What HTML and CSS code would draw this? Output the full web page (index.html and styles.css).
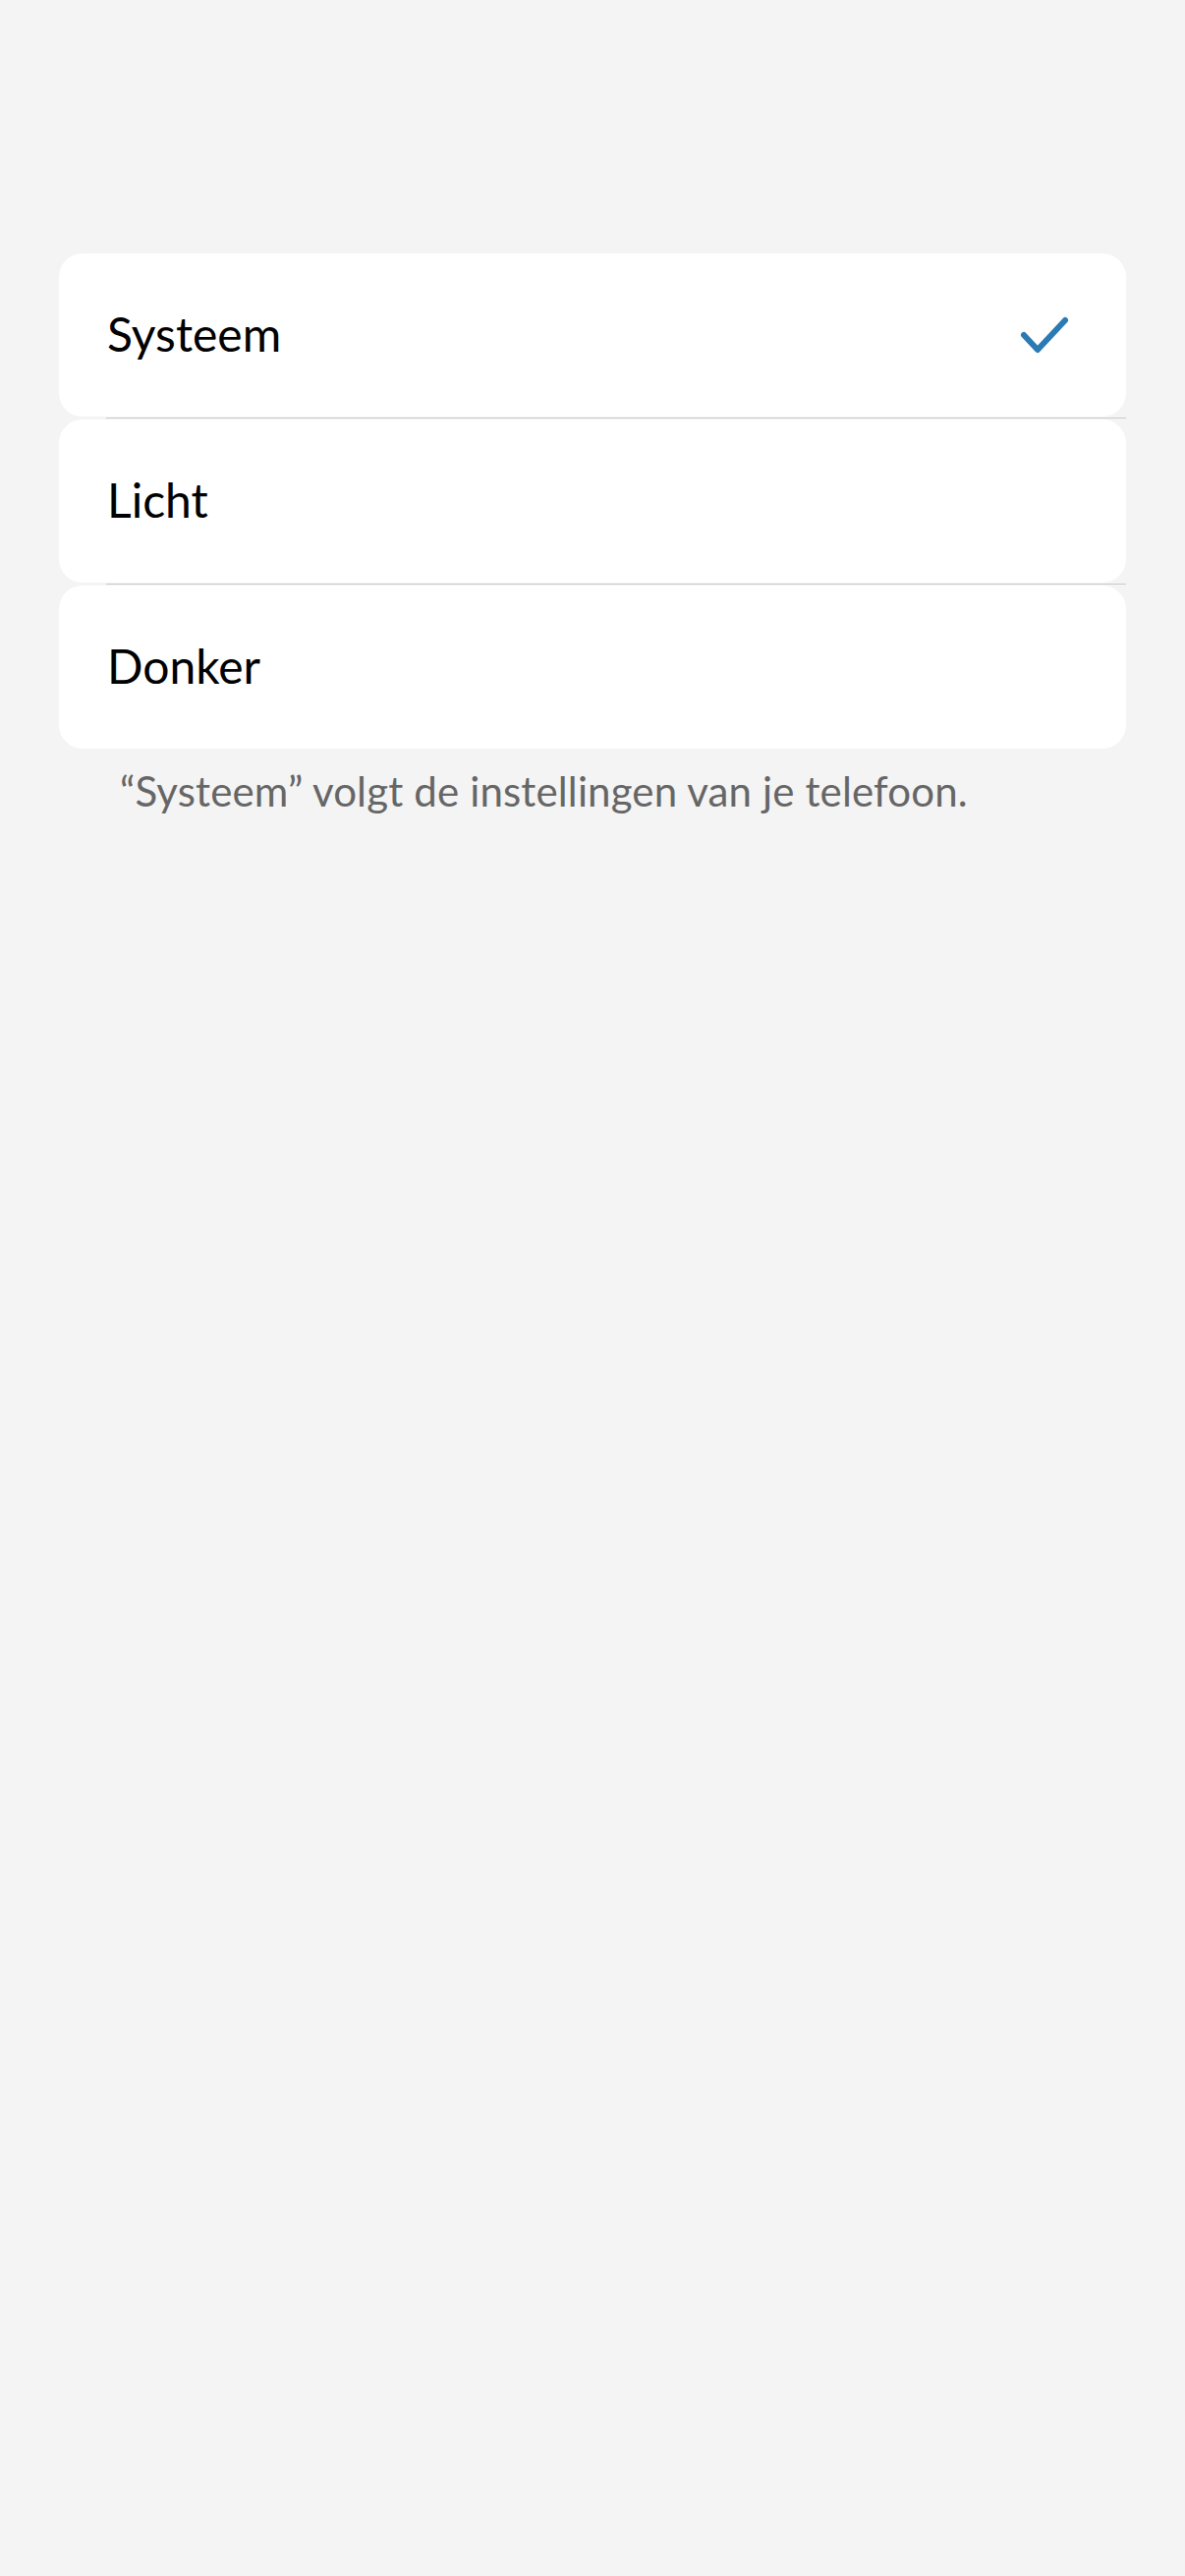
FILE: index.html
```html
<!DOCTYPE html>
<html lang="nl">
<head>
<meta charset="utf-8">
<title>Weergave</title>
<link rel="stylesheet" href="styles.css">
</head>
<body>
<main class="page">
  <div class="options">
    <div class="option">
      <span class="label">Systeem</span>
      <svg class="check" width="50" height="38" viewBox="0 0 50 38" aria-hidden="true">
        <polyline points="4,19 18,34 46,4" fill="none" stroke="#2a7ab4" stroke-width="6" stroke-linecap="round" stroke-linejoin="round"/>
      </svg>
    </div>
    <div class="sep"></div>
    <div class="option">
      <span class="label">Licht</span>
    </div>
    <div class="sep"></div>
    <div class="option">
      <span class="label">Donker</span>
    </div>
  </div>
  <p class="caption">“Systeem” volgt de instellingen van je telefoon.</p>
</main>
</body>
</html>
```
FILE: styles.css
```css
html, body {
  margin: 0;
  padding: 0;
  background: #f4f4f4;
}
body {
  font-family: Lato, "Noto Sans", sans-serif;
  min-height: 2622px;
}
.page {
  padding: 258px 60px 0 60px;
}
.options {
  display: flex;
  flex-direction: column;
}
.option {
  height: 166px;
  background: #ffffff;
  border-radius: 24px;
  display: flex;
  align-items: center;
  justify-content: space-between;
  padding: 0 58px 0 49px;
}
.label {
  font-size: 48px;
  color: #000000;
  padding-bottom: 4px;
}
.check {
  display: block;
}
.sep {
  height: 1px;
  margin: 1px 0 1px 48px;
  background: #cacaca;
}
.caption {
  margin: 18px 0 0 0;
  padding-left: 62px;
  font-size: 42px;
  letter-spacing: 0.15px;
  color: #666666;
}
```
